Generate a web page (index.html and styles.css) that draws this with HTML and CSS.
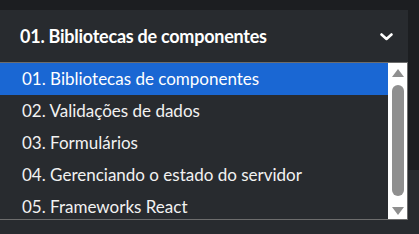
FILE: index.html
```html
<!DOCTYPE html>
<html lang="pt-BR">
<head>
  <meta charset="UTF-8">
  <title>Módulos</title>
  <link rel="stylesheet" href="styles.css">
</head>
<body>

  <div class="select-card">
    <div class="select-head">
      <span class="select-title">01. Bibliotecas de componentes</span>
      <svg class="chevron" width="13" height="8" viewBox="0 0 13 8">
        <path d="M1.5 1.5 L6.5 6 L11.5 1.5" fill="none" stroke="#fff" stroke-width="2.6" stroke-linecap="round" stroke-linejoin="round"/>
      </svg>
    </div>

    <div class="select-list">
      <ul class="options">
        <li class="selected">01. Bibliotecas de componentes</li>
        <li>02. Validações de dados</li>
        <li>03. Formulários</li>
        <li>04. Gerenciando o estado do servidor</li>
        <li>05. Frameworks React</li>
      </ul>
      <div class="scrollbar">
        <div class="arrow up"></div>
        <div class="thumb"></div>
        <div class="arrow down"></div>
      </div>
    </div>
  </div>

  <div class="next-card"></div>

</body>
</html>
```

FILE: styles.css
```css
* {
  margin: 0;
  padding: 0;
  box-sizing: border-box;
}

body {
  font-family: 'Lato', sans-serif;
  background: #1c1e21;
  height: 234px;
  overflow: hidden;
  padding-top: 10px;
}

.select-card {
  position: relative;
  width: 408px;
  height: 52px;
  background: #282b2f;
}

.select-head {
  display: flex;
  align-items: center;
  justify-content: space-between;
  height: 52px;
  padding: 0 15px 0 20px;
}

.select-title {
  color: #fff;
  font-weight: bold;
  font-size: 18px;
  letter-spacing: -0.25px;
}

.chevron {
  margin-top: 1px;
}

/* dropdown popup */
.select-list {
  position: absolute;
  top: 52px;
  left: 0;
  width: 408px;
  height: 158px;
  display: flex;
  background: #282b2f;
  border-top: 1px solid #6d6d6d;
  border-bottom: 1px solid #6d6d6d;
  border-right: 1px solid #6d6d6d;
  overflow: hidden;
  z-index: 2;
}

.options {
  flex: 1;
  list-style: none;
}

.options li {
  height: 32px;
  line-height: 32px;
  padding-left: 22px;
  color: #f2f2f2;
  font-size: 17px;
  white-space: nowrap;
}

.options li.selected {
  background: #1a67d3;
  color: #fff;
}

.scrollbar {
  width: 19px;
  background: #fff;
  display: flex;
  flex-direction: column;
  align-items: center;
  padding: 6px 0 4px;
}

.arrow {
  width: 0;
  height: 0;
  border-left: 6px solid transparent;
  border-right: 6px solid transparent;
}

.arrow.up {
  border-bottom: 8px solid #8f8f8f;
}

.arrow.down {
  border-top: 8px solid #8f8f8f;
}

.thumb {
  width: 12px;
  flex: 1;
  margin: 8px 0 11px;
  background: #8f8f8f;
  border-radius: 6px;
}

.next-card {
  margin-top: 108px;
  height: 64px;
  background: #282b2f;
}
```
